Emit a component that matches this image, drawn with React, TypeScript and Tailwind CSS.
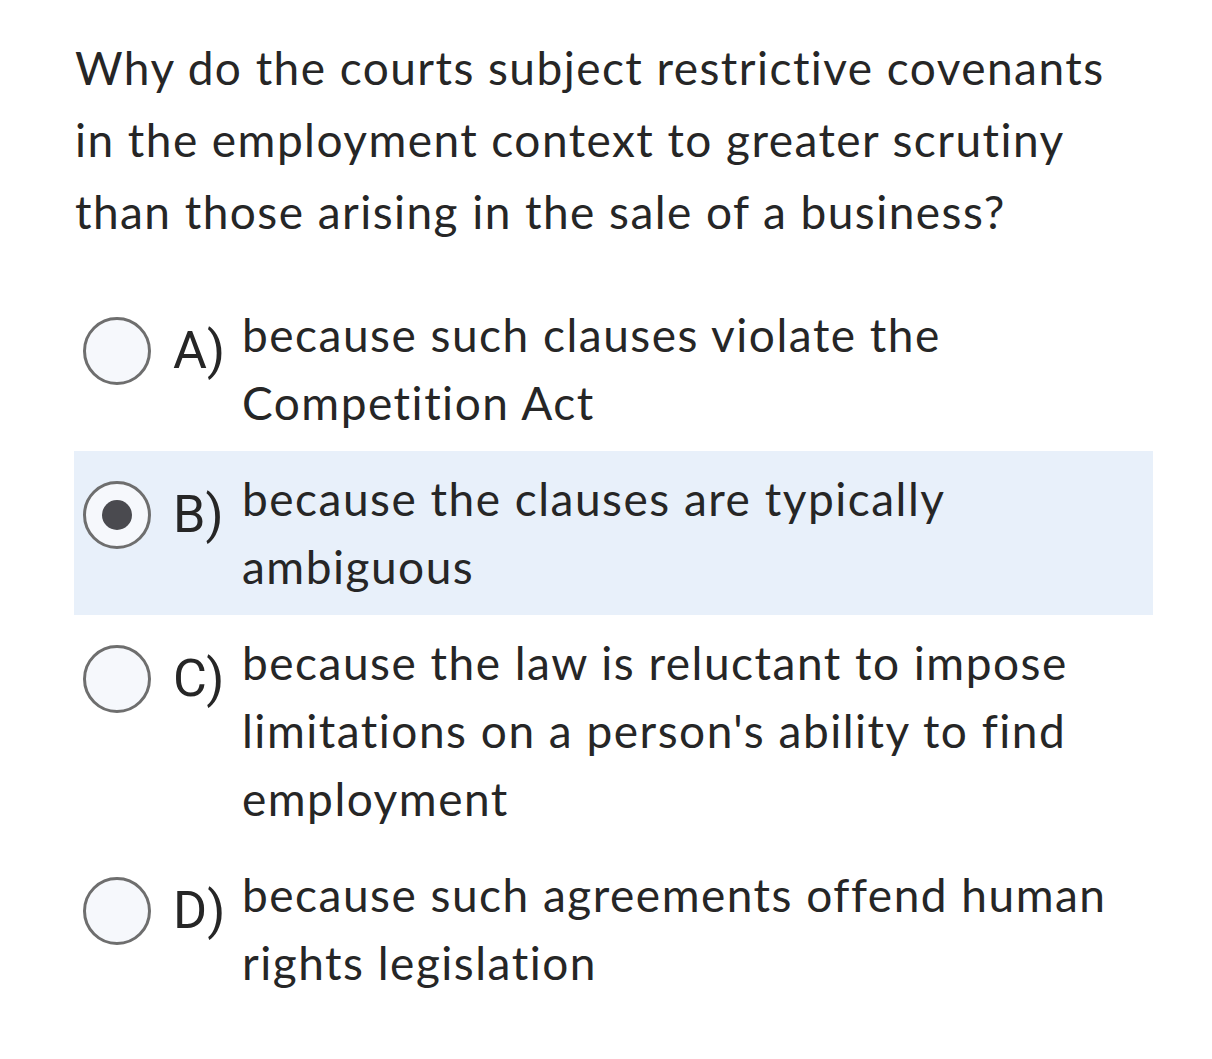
import React from 'react';

const options = [
  { id: 'A', lines: 'because such clauses violate the Competition Act', selected: false },
  { id: 'B', lines: 'because the clauses are typically ambiguous', selected: true },
  {
    id: 'C',
    lines: "because the law is reluctant to impose limitations on a person's ability to find employment",
    selected: false,
  },
  { id: 'D', lines: 'because such agreements offend human rights legislation', selected: false },
];

function Radio({ selected }: { selected: boolean }) {
  return (
    <div className="w-[68px] h-[68px] rounded-full border-[3px] border-[#6e6e6e] bg-[#f6f8fc] flex items-center justify-center shrink-0">
      {selected && <div className="w-[30px] h-[30px] rounded-full bg-[#4a4a4f]" />}
    </div>
  );
}

export default function App() {
  return (
    <div className="min-h-screen bg-white text-[#262626] font-['Lato','Noto_Sans',sans-serif] [font-variant-ligatures:none]">
      <div className="pl-[75px] pr-[59px] pt-[32px]">
        <p className="text-[46px] leading-[72px] tracking-[1.45px] max-w-[1070px]">
          Why do the courts subject restrictive covenants in the employment context to greater scrutiny
          than those arising in the sale of a business?
        </p>

        <div className="mt-[39px] -ml-[1px]">
          {options.map((o) => (
            <div
              key={o.id}
              className={`flex items-start py-[14px] ${o.selected ? 'bg-[#e8f0fa]' : ''}`}
            >
              <div className="flex items-center w-[168px] shrink-0 pl-[9px] pt-[16px]">
                <Radio selected={o.selected} />
                <span className="ml-[22px] text-[52px] leading-[68px] font-['Roboto',sans-serif]">
                  {o.id})
                </span>
              </div>
              <p className="text-[46px] leading-[68px] tracking-[1.5px] max-w-[890px]">{o.lines}</p>
            </div>
          ))}
        </div>
      </div>
    </div>
  );
}
